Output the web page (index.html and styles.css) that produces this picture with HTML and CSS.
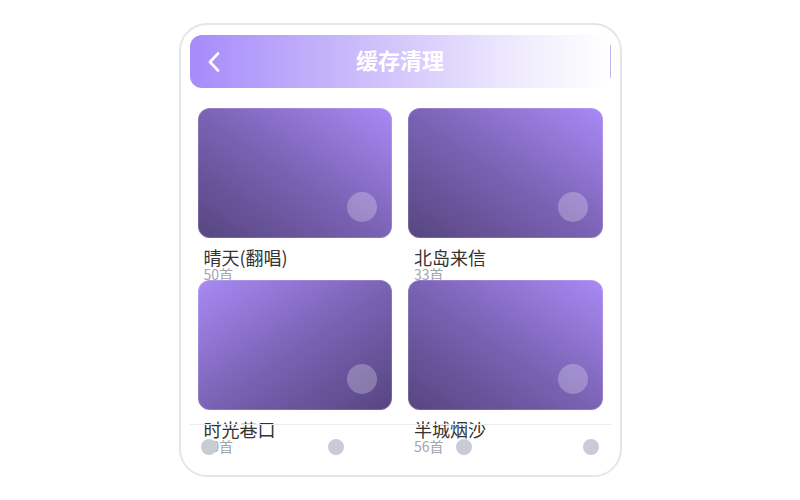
FILE: index.html
```html
<!DOCTYPE html>
<html lang="zh-CN">
<head>
    <meta charset="UTF-8">
    <meta name="viewport" content="width=device-width, initial-scale=1.0">
    <title>缓存清理</title>
    <link rel="stylesheet" href="styles.css">
</head>
<body>
    <div class="phone">
        <div class="header">
            <span class="back">
                <svg width="12" height="20" viewBox="0 0 12 20"><path d="M10 1.5 L2 10 L10 18.5" fill="none" stroke="#fff" stroke-width="2.6" stroke-linecap="round" stroke-linejoin="round"/></svg>
            </span>
            <h1 class="title">缓存清理</h1>
        </div>

        <div class="grid">
            <div class="item">
                <div class="cover cover-a"><span class="dot"></span></div>
                <div class="name">晴天(翻唱)</div>
                <div class="count">50首</div>
            </div>
            <div class="item">
                <div class="cover cover-a"><span class="dot"></span></div>
                <div class="name">北岛来信</div>
                <div class="count">33首</div>
            </div>
            <div class="item">
                <div class="cover cover-b"><span class="dot"></span></div>
                <div class="name">时光巷口</div>
                <div class="count">50首</div>
            </div>
            <div class="item">
                <div class="cover cover-a"><span class="dot"></span></div>
                <div class="name">半城烟沙</div>
                <div class="count">56首</div>
            </div>
        </div>

        <!-- bottom bar sits over the list -->
        <div class="tabbar">
            <span class="tab"></span>
            <span class="tab"></span>
            <span class="tab"></span>
            <span class="tab"></span>
        </div>
    </div>
</body>
</html>
```

FILE: styles.css
```css
body {
    margin: 0;
    height: 100vh;
    display: flex;
    align-items: center;
    justify-content: center;
    background: #fff;
    font-family: "Noto Sans CJK SC", "Noto Sans", sans-serif;
}
.phone {
    position: relative;
    box-sizing: border-box;
    width: 443px;
    height: 454px;
    padding: 10px 9px;
    border: 2px solid #e6e6ea;
    border-radius: 28px;
    overflow: hidden;
    background: #fff;
}
.header {
    position: relative;
    height: 53px;
    display: flex;
    align-items: center;
    justify-content: center;
    border-radius: 12px;
    background: linear-gradient(to right, #a78bfa, #d4c8fb 50%, #f1edfe 80%, #ffffff);
}
.header::after {
    content: "";
    position: absolute;
    right: 0;
    top: 10px;
    bottom: 10px;
    width: 1px;
    background: #c3b3f5;
}
.back {
    position: absolute;
    left: 18px;
    top: 17px;
    display: flex;
}
.title {
    margin: 0 0 5px;
    color: #fff;
    font-size: 22px;
    font-weight: 700;
    line-height: 1;
}
.grid {
    display: grid;
    grid-template-columns: 1fr 1fr;
    grid-auto-rows: 172px;
    column-gap: 16px;
    padding: 20px 8px 0;
}
.item {
    min-width: 0;
}
.cover {
    position: relative;
    height: 130px;
    border-radius: 12px;
    box-shadow: inset 0 0 0 1px rgba(255, 255, 255, 0.15);
}
.cover-a {
    background: linear-gradient(to top right, #574580, #7b63b5 50%, #a88af5);
}
.cover-b {
    background: linear-gradient(to bottom right, #a88af5, #7b63b5 50%, #574580);
}
.dot {
    position: absolute;
    right: 15px;
    bottom: 16px;
    width: 30px;
    height: 30px;
    border-radius: 50%;
    background: rgba(255, 255, 255, 0.25);
}
.name {
    margin-top: 8px;
    padding-left: 6px;
    font-size: 18px;
    line-height: 22px;
    color: #333;
}
.count {
    padding-left: 6px;
    font-size: 14px;
    line-height: 12px;
    color: #a2a6ad;
}
.tabbar {
    position: absolute;
    left: 9px;
    right: 9px;
    bottom: 0;
    height: 51px;
    box-sizing: border-box;
    display: flex;
    justify-content: space-between;
    align-items: flex-start;
    padding: 14px 11px 0;
    border-top: 1px solid #ececef;
}
.tab {
    width: 16px;
    height: 16px;
    border-radius: 50%;
    background: #c8ccd4;
}
```
